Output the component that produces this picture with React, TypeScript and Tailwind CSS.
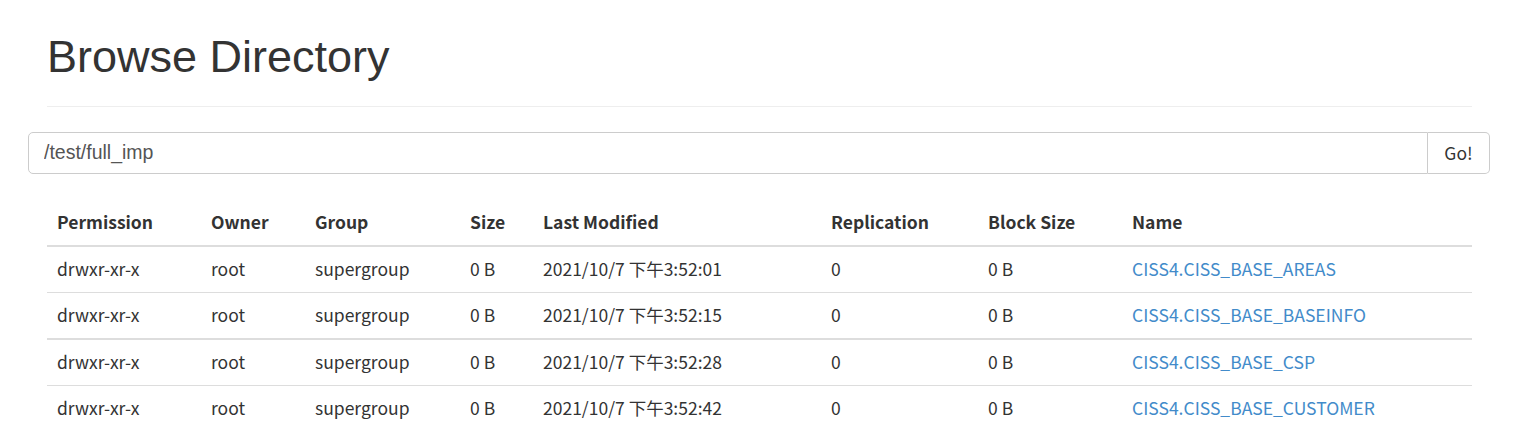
const rows = [
  { time: "3:52:01", name: "CISS4.CISS_BASE_AREAS" },
  { time: "3:52:15", name: "CISS4.CISS_BASE_BASEINFO" },
  { time: "3:52:28", name: "CISS4.CISS_BASE_CSP" },
  { time: "3:52:42", name: "CISS4.CISS_BASE_CUSTOMER" },
];

const body = '[font-family:"Noto_Sans_CJK_SC","Noto_Sans",sans-serif]';

function Row({ time, name, thick }: { time: string; name: string; thick?: boolean }) {
  const border = thick ? "border-b-2" : "border-b";
  return (
    <tr className={`${border} border-[#ddd]`}>
      <td className="px-[10px] pt-[9px] pb-[11px]">drwxr-xr-x</td>
      <td className="px-[10px] pt-[9px] pb-[11px]">root</td>
      <td className="px-[10px] pt-[9px] pb-[11px]">supergroup</td>
      <td className="px-[10px] pt-[9px] pb-[11px]">0 B</td>
      <td className="px-[10px] pt-[9px] pb-[11px]">2021/10/7 下午{time}</td>
      <td className="px-[10px] pt-[9px] pb-[11px]">0</td>
      <td className="px-[10px] pt-[9px] pb-[11px]">0 B</td>
      <td className="px-[10px] pt-[9px] pb-[11px]">
        <a href="#" className="text-[#428bca]">
          {name}
        </a>
      </td>
    </tr>
  );
}

export default function App() {
  return (
    <div className="min-h-screen bg-white text-[#333]">
      {/* page header */}
      <div className="pl-[47px] pr-[45px] pt-[32px]">
        <div className="border-b border-[#eee] pb-[24px]">
          <h1 className="text-[45px] leading-[50px] font-['Liberation_Sans',Arial,sans-serif]">Browse Directory</h1>
        </div>
      </div>

      {/* path input */}
      <div className="mt-[25px] pl-[28px] pr-[27px]">
        <div className="flex h-[42px]">
          <input
            defaultValue="/test/full_imp"
            className="flex-1 min-w-0 rounded-l-[5px] border border-[#ccc] px-[15px] text-[19.5px] text-[#555] font-['Liberation_Sans',Arial,sans-serif] outline-none"
          />
          <button className={`w-[62px] rounded-r-[5px] border border-l-0 border-[#ccc] bg-white text-[17.5px] ${body}`}>
            Go!
          </button>
        </div>
      </div>

      {/* listing */}
      <div className={`mt-[26px] pl-[47px] pr-[45px] text-[17.5px] leading-[25px] ${body}`}>
        <table className="w-full table-fixed border-collapse text-left">
          <thead>
            <tr className="border-b-2 border-[#ddd]">
              <th className="w-[154px] px-[10px] pt-[9px] pb-[11px] font-bold">Permission</th>
              <th className="w-[104px] px-[10px] pt-[9px] pb-[11px] font-bold">Owner</th>
              <th className="w-[155px] px-[10px] pt-[9px] pb-[11px] font-bold">Group</th>
              <th className="w-[73px] px-[10px] pt-[9px] pb-[11px] font-bold">Size</th>
              <th className="w-[288px] px-[10px] pt-[9px] pb-[11px] font-bold">Last Modified</th>
              <th className="w-[157px] px-[10px] pt-[9px] pb-[11px] font-bold">Replication</th>
              <th className="w-[144px] px-[10px] pt-[9px] pb-[11px] font-bold">Block Size</th>
              <th className="px-[10px] pt-[9px] pb-[11px] font-bold">Name</th>
            </tr>
          </thead>
          <tbody>
            {rows.map((r, i) => (
              <Row key={r.time} time={r.time} name={r.name} thick={i === 1} />
            ))}
          </tbody>
        </table>
      </div>
    </div>
  );
}
